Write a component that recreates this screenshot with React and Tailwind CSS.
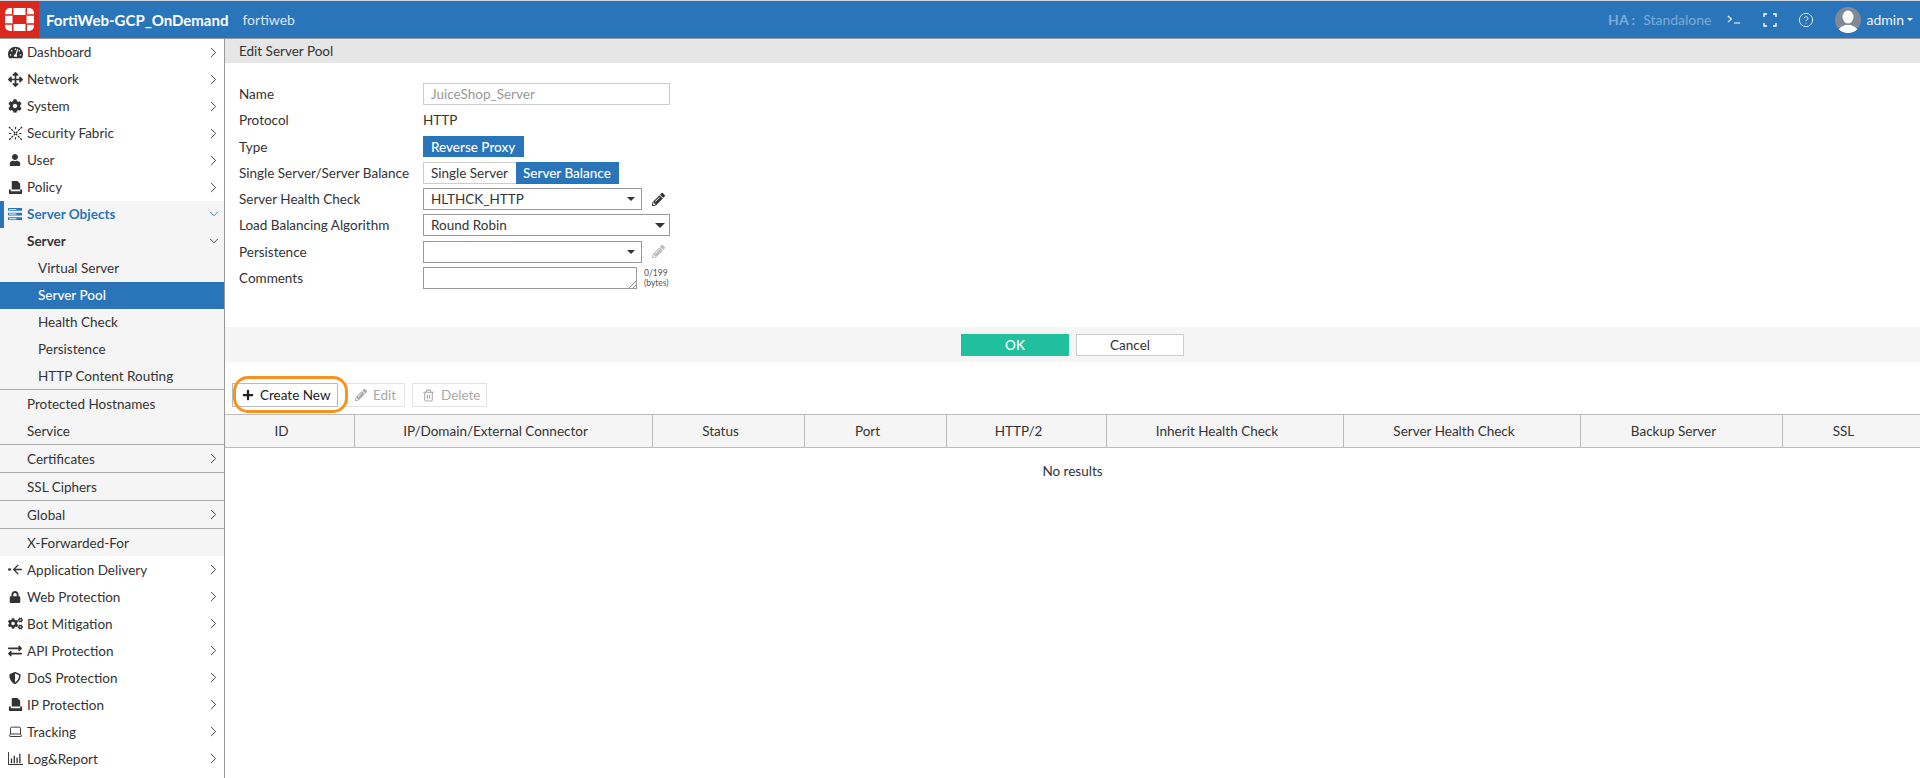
import { ChevronRight, ChevronDown, Trash2, HelpCircle, Laptop } from 'lucide-react'
import { FaTachometerAlt, FaArrowsAlt, FaCog, FaUser, FaCogs, FaLock, FaPencilAlt, FaPlus, FaExchangeAlt, FaShieldAlt } from 'react-icons/fa'

const FortiLogo = () => (
  <svg viewBox="0 0 29 23" className="h-[23px] w-[29px]">
    <rect x="0" y="0" width="29" height="23" rx="5" fill="#fff" />
    <rect x="7.500" y="7" width="14" height="9" fill="#da291c" />
    <path d="M7 0h1.500v7H7zM20.500 0H22v7h-1.500zM7 16h1.500v7H7zM20.500 16H22v7h-1.500z" fill="#da291c" />
    <path d="M0 6.300h7.500v1.500H0zM21.500 6.300H29v1.500h-7.500zM0 15.200h7.500v1.500H0zM21.500 15.200H29v1.500h-7.500z" fill="#da291c" />
  </svg>
)

const PolicyIcon = () => (
  <svg viewBox="0 0 16 16" className="h-[15px] w-[15px]" fill="#333">
    <path d="M4 1h6l3 3v6H4z" />
    <path d="M1 10h2v2h10v-2h2v4a1 1 0 0 1-1 1H2a1 1 0 0 1-1-1z" />
  </svg>
)

const FabricIcon = () => (
  <svg viewBox="0 0 16 16" className="h-[15px] w-[15px]" fill="none" stroke="#333" strokeWidth="1.300" strokeDasharray="2.400 1">
    <path d="M1 1l14 14M15 1L1 15" />
    <path d="M8 1v3M8 12v3M1 8h3M12 8h3" />
  </svg>
)

const ServerIcon = () => (
  <svg viewBox="0 0 16 14" className="h-[13px] w-[15px]" fill="#2a75b9">
    <path d="M0 0h15v3H0zM0 5h15v3H0zM0 10h15v3H0z" />
    <path d="M1 1h8v1H1zM1 6h8v1H1zM1 11h8v1H1z" fill="#fff" />
  </svg>
)

const DeliveryIcon = () => (
  <svg viewBox="0 0 16 12" className="h-[11px] w-[15px]" fill="none" stroke="#333" strokeWidth="1.400">
    <path d="M0 6h3" strokeWidth="2.400" />
    <path d="M11 1L6 6l5 5M6 6h9" />
  </svg>
)

const ChartIcon = () => (
  <svg viewBox="0 0 16 14" className="h-[13px] w-[15px]" fill="#333">
    <path d="M0 0h1v13h15v1H0z" />
    <path d="M3 7h1.400v5H3zM6 4h1.400v8H6zM9 6h1.400v6H9zM12 2h1.400v10H12z" />
  </svg>
)

const topItems = [
  ['Dashboard', <FaTachometerAlt size={15} color="#333" />],
  ['Network', <FaArrowsAlt size={15} color="#333" />],
  ['System', <FaCog size={14} color="#333" />],
  ['Security Fabric', <FabricIcon />],
  ['User', <FaUser size={12} color="#333" />],
  ['Policy', <PolicyIcon />],
]

const bottomItems = [
  ['Application Delivery', <DeliveryIcon />],
  ['Web Protection', <FaLock size={12} color="#333" />],
  ['Bot Mitigation', <FaCogs size={15} color="#333" />],
  ['API Protection', <FaExchangeAlt size={14} color="#333" />],
  ['DoS Protection', <FaShieldAlt size={12} color="#333" />],
  ['IP Protection', <PolicyIcon />],
  ['Tracking', <Laptop size={15} color="#333" strokeWidth={1.500} />],
  ['Log&Report', <ChartIcon />],
]

const subItems = ['Virtual Server', 'Server Pool', 'Health Check', 'Persistence', 'HTTP Content Routing']

const columns = [
  ['ID', 'w-[130px]'],
  ['IP/Domain/External Connector', 'w-[298px]'],
  ['Status', 'w-[152px]'],
  ['Port', 'w-[142px]'],
  ['HTTP/2', 'w-[160px]'],
  ['Inherit Health Check', 'w-[237px]'],
  ['Server Health Check', 'w-[237px]'],
  ['Backup Server', 'w-[202px]'],
  ['SSL', 'flex-1'],
]

const Right = () => <ChevronRight size={17} strokeWidth={1.300} className="mr-[2px] text-[#333]" />
const Down = ({ blue }) => <ChevronDown size={14} strokeWidth={1.500} className={`mr-[3px] ${blue ? 'text-[#2a75b9]' : 'text-[#333]'}`} />

function MenuRow({ label, icon, open, active, raised }) {
  return (
    <div className={`relative flex h-[27px] items-center ${raised ? 'pb-px' : ''}`}>
      {active && <div className="absolute left-0 top-0 h-[27px] w-[4px] bg-[#2a75b9]" />}
      <div className="flex w-[27px] justify-center pl-[3px]">{icon}</div>
      <span className={`flex-1 ${active ? 'font-bold text-[#2a75b9]' : ''}`}>{label}</span>
      {open ? <Down blue /> : <Right />}
    </div>
  )
}

function GroupRow({ label, chevron }) {
  return (
    <div className="flex h-[28px] items-center border-t border-[#aaa] pl-[27px]">
      <span className="flex-1">{label}</span>
      {chevron && <Right />}
    </div>
  )
}

function Field({ label, children }) {
  return (
    <div className="flex h-[26.25px] items-center">
      <div className="w-[184px]">{label}</div>
      {children}
    </div>
  )
}

const Caret = ({ big }) => (
  <div className={`border-x-transparent border-t-[#333] ${big ? 'border-x-[5px] border-t-[5px]' : 'border-x-[4px] border-t-[4px]'}`} />
)

export default function App() {
  return (
    <div className="h-[778px] overflow-hidden bg-white text-[13.5px] leading-[20px] text-[#333] font-['Lato','Open_Sans',sans-serif]">
      <div className="h-px bg-[#cfd8e0]" />
      <header className="flex h-[38px] items-center border-b border-[#999] bg-[#2a75b9] text-[14px] text-white">
        <div className="flex h-full w-[39px] items-center justify-center bg-[#da291c]">
          <FortiLogo />
        </div>
        <span className="ml-[7px] text-[15px] font-bold">FortiWeb-GCP_OnDemand</span>
        <span className="ml-[14px] text-[#dbe7f3]">fortiweb</span>
        <div className="ml-auto flex items-center">
          <span className="font-bold text-[#7fabd6]">HA :</span>
          <span className="ml-[8px] text-[#7fabd6]">Standalone</span>
          <svg viewBox="0 0 16 10" className="ml-[15px] h-[9px] w-[14px]" fill="none" stroke="#fff" strokeWidth="1.300">
            <path d="M1 1l4 3.500L1 8M8 9h7" />
          </svg>
          <svg viewBox="0 0 14 14" className="ml-[22px] h-[14px] w-[14px]" fill="none" stroke="#fff" strokeWidth="1.400">
            <path d="M1 4V1h3M10 1h3v3M13 10v3h-3M4 13H1v-3" />
          </svg>
          <HelpCircle size={16} strokeWidth={1.200} className="ml-[21px] text-white" />
          <div className="ml-[21px] h-[26px] w-[26px] overflow-hidden rounded-full bg-[#7e8a95]">
            <svg viewBox="0 0 26 26" className="h-[26px] w-[26px]" fill="#fff">
              <ellipse cx="13" cy="10" rx="5.500" ry="6.500" />
              <path d="M3 26c0-6 5-6.500 7-8h6c2 1.500 7 2 7 8z" />
            </svg>
          </div>
          <span className="ml-[6px] text-[#eef4fa]">admin</span>
          <div className="ml-[3px] mr-[7px] border-x-[3px] border-t-[3px] border-x-transparent border-t-white" />
        </div>
      </header>

      <div className="flex h-[739px]">
        <aside className="w-[225px] shrink-0 border-r border-[#999]">
          {topItems.map(([label, icon]) => (
            <MenuRow key={label} label={label} icon={icon} raised />
          ))}
          <div className="bg-[#f5f5f5]">
            <MenuRow label="Server Objects" icon={<ServerIcon />} active open raised />
            <div className="flex h-[27px] items-center pb-px pl-[27px] font-bold">
              <span className="flex-1">Server</span>
              <Down />
            </div>
            {subItems.map((s) => (
              <div
                key={s}
                className={`flex items-center pl-[38px] ${s === 'Server Pool' ? 'bg-[#2a75b9] font-medium text-white' : ''} ${s === 'HTTP Content Routing' ? 'h-[26px]' : 'h-[27px] pb-px'}`}
              >
                {s}
              </div>
            ))}
            <GroupRow label="Protected Hostnames" />
            <div className="flex h-[27px] items-center pl-[27px]">Service</div>
            <GroupRow label="Certificates" chevron />
            <GroupRow label="SSL Ciphers" />
            <GroupRow label="Global" chevron />
            <GroupRow label="X-Forwarded-For" />
          </div>
          {bottomItems.map(([label, icon]) => (
            <MenuRow key={label} label={label} icon={icon} />
          ))}
        </aside>

        <main className="min-w-0 flex-1">
          <div className="flex h-[24px] items-center bg-[#e6e6e6] pl-[14px]">Edit Server Pool</div>

          <div className="pl-[14px] pt-[18px]">
            <Field label="Name">
              <div className="flex h-[22px] w-[247px] items-center border border-[#ccc] pl-[7px] text-[#999]">JuiceShop_Server</div>
            </Field>
            <Field label="Protocol">HTTP</Field>
            <Field label="Type">
              <div className="flex h-[21px] w-[101px] items-center bg-[#2a75b9] pl-[8px] font-medium text-white">Reverse Proxy</div>
            </Field>
            <Field label="Single Server/Server Balance">
              <div className="flex h-[22px] w-[93px] items-center border border-r-0 border-[#ccc] pl-[7px]">Single Server</div>
              <div className="flex h-[22px] w-[103px] items-center bg-[#2a75b9] pl-[7px] font-medium text-white">Server Balance</div>
            </Field>
            <Field label="Server Health Check">
              <div className="flex h-[22px] w-[219px] items-center justify-between border border-[#999] pl-[7px] pr-[6px]">
                HLTHCK_HTTP
                <Caret />
              </div>
              <FaPencilAlt size={13} color="#333" className="ml-[10px]" />
            </Field>
            <Field label="Load Balancing Algorithm">
              <div className="flex h-[22px] w-[247px] items-center justify-between border border-[#999] pl-[7px] pr-[4px]">
                Round Robin
                <Caret big />
              </div>
            </Field>
            <Field label="Persistence">
              <div className="flex h-[22px] w-[219px] items-center justify-end border border-[#999] pr-[6px]">
                <Caret />
              </div>
              <FaPencilAlt size={13} color="#bbb" className="ml-[10px]" />
            </Field>
            <Field label="Comments">
              <div className="relative h-[22px] w-[214px] border border-[#999]">
                <svg viewBox="0 0 8 8" className="absolute bottom-0 right-0 h-[8px] w-[8px]" stroke="#666" strokeWidth="0.800">
                  <path d="M1 8l7-7M5 8l3-3" />
                </svg>
              </div>
              <div className="ml-[7px] text-[8.5px] leading-[10px] text-[#555]">
                0/199
                <br />
                (bytes)
              </div>
            </Field>
          </div>

          <div className="mt-[36px] flex h-[35px] items-center justify-center gap-[7px] bg-[#f5f5f5]">
            <div className="flex h-[22px] w-[108px] items-center justify-center bg-[#20c09e] font-medium text-white">OK</div>
            <div className="flex h-[22px] w-[108px] items-center justify-center border border-[#ccc] bg-white">Cancel</div>
          </div>

          <div className="flex gap-[7px] pl-[7px] pt-[21px]">
            <div className="relative flex h-[24px] w-[106px] items-center border border-[#bbb] pl-[9px]">
              <div className="absolute left-0 -top-[8px] h-[37px] w-[115px] rounded-[15px] border-[3px] border-[#f7931e]" />
              <FaPlus size={12} color="#222" />
              <span className="ml-[6px] text-[#222]">Create New</span>
            </div>
            <div className="flex h-[24px] w-[60px] items-center border border-[#e3e3e3] pl-[9px] text-[#aaa]">
              <FaPencilAlt size={12} color="#aaa" />
              <span className="ml-[6px]">Edit</span>
            </div>
            <div className="flex h-[24px] w-[75px] items-center border border-[#e3e3e3] pl-[9px] text-[#aaa]">
              <Trash2 size={13} />
              <span className="ml-[6px]">Delete</span>
            </div>
          </div>

          <div className="mt-[7px] flex h-[34px] border-y border-[#bbb] bg-[#f5f5f5]">
            {columns.map(([name, w], i) => (
              <div key={name} className={`flex items-center justify-center pr-[16px] ${w} ${i < columns.length - 1 ? 'border-r border-[#bbb]' : ''}`}>
                {name}
              </div>
            ))}
          </div>
          <div className="pt-[13px] text-center">No results</div>
        </main>
      </div>
    </div>
  )
}
